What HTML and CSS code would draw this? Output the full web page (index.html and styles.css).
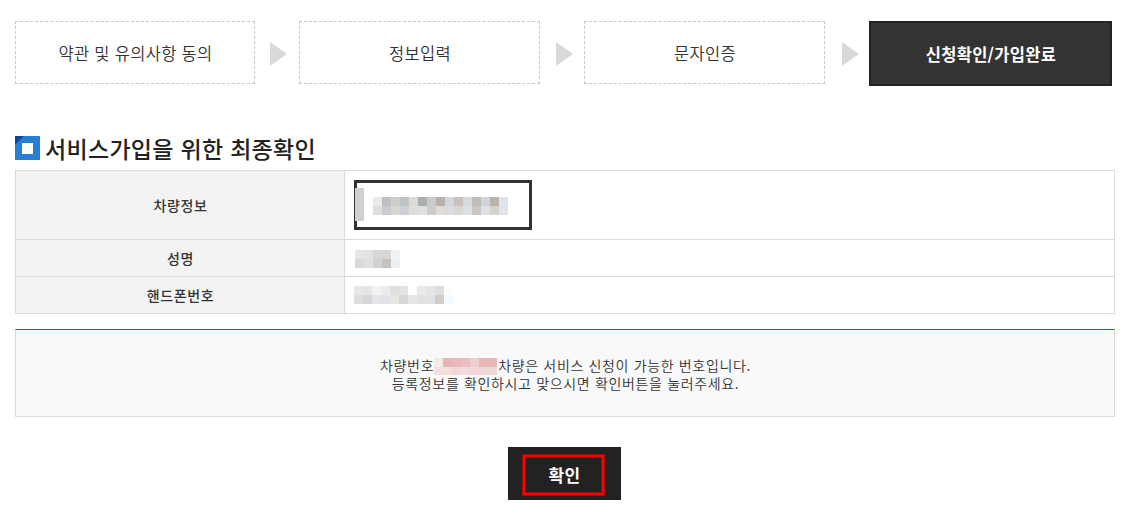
FILE: index.html
```html
<!DOCTYPE html>
<html lang="ko">
<head>
<meta charset="utf-8">
<title>서비스가입</title>
<link rel="stylesheet" href="styles.css">
</head>
<body>
<main class="page">
  <div class="steps">
    <div class="step">약관 및 유의사항 동의</div>
    <svg class="arrow" width="17" height="24" viewBox="0 0 17 24"><path d="M0 0L17 12L0 24Z"/></svg>
    <div class="step">정보입력</div>
    <svg class="arrow arrow-mid" width="17" height="24" viewBox="0 0 17 24"><path d="M0 0L17 12L0 24Z"/></svg>
    <div class="step">문자인증</div>
    <svg class="arrow arrow-last" width="17" height="24" viewBox="0 0 17 24"><path d="M0 0L17 12L0 24Z"/></svg>
    <div class="step step-on">신청확인/가입완료</div>
  </div>
  <h1 class="title">
    <svg class="title-icon" width="25" height="24" viewBox="0 0 25 24"><path fill="#267fd0" d="M0 0H25V24H0Z"/><path fill="#0d47a1" d="M0 0H9L0 9Z"/><path fill="#fff" d="M7 7H18V18H7Z"/></svg>
    <span>서비스가입을 위한 최종확인</span>
  </h1>
  <div class="table">
    <div class="th">차량정보</div>
    <div class="td">
      <div class="car">
        <svg width="135" height="18" viewBox="0 0 15 2" shape-rendering="crispEdges"><path fill="#ebeae8" d="M0 0h1v1h-1z"/><path fill="#bebfc0" d="M1 0h1v1h-1z"/><path fill="#cfcdc8" d="M2 0h1v1h-1z"/><path fill="#bfc4c8" d="M3 0h1v1h-1z"/><path fill="#dbdad5" d="M4 0h1v1h-1z"/><path fill="#acafb1" d="M5 0h1v1h-1z"/><path fill="#c9cbce" d="M6 0h1v1h-1z"/><path fill="#b8b2aa" d="M7 0h1v1h-1z"/><path fill="#d3d6dd" d="M8 0h1v1h-1z"/><path fill="#c9bfbc" d="M9 0h1v1h-1z"/><path fill="#d4dbdf" d="M10 0h1v1h-1z"/><path fill="#c0bcb9" d="M11 0h1v1h-1z"/><path fill="#d2d3d8" d="M12 0h1v1h-1z"/><path fill="#bab4ac" d="M13 0h1v1h-1z"/><path fill="#dfe3ed" d="M14 0h1v1h-1z"/><path fill="#e0dcd7" d="M0 1h1v1h-1z"/><path fill="#c8cbd1" d="M1 1h1v1h-1z"/><path fill="#d7d6d1" d="M2 1h1v1h-1z"/><path fill="#cfd0d5" d="M3 1h1v1h-1z"/><path fill="#dfdddb" d="M4 1h1v1h-1z"/><path fill="#dfe0e2" d="M5 1h1v1h-1z"/><path fill="#cccdcb" d="M6 1h1v1h-1z"/><path fill="#e2dcd9" d="M7 1h1v1h-1z"/><path fill="#d8dce0" d="M8 1h1v1h-1z"/><path fill="#d8d7d3" d="M9 1h1v1h-1z"/><path fill="#dddfe3" d="M10 1h1v1h-1z"/><path fill="#cbc6c3" d="M11 1h1v1h-1z"/><path fill="#dde1e4" d="M12 1h1v1h-1z"/><path fill="#d6d2cb" d="M13 1h1v1h-1z"/><path fill="#e0e3e9" d="M14 1h1v1h-1z"/></svg>
      </div>
    </div>
    <div class="th">성명</div>
    <div class="td td-name">
      <svg width="45" height="18" viewBox="0 0 5 2" shape-rendering="crispEdges"><path fill="#e6e6e7" d="M0 0h1v1h-1z"/><path fill="#e3e3e4" d="M1 0h1v1h-1z"/><path fill="#d4d8db" d="M2 0h1v1h-1z"/><path fill="#d8d7d5" d="M3 0h1v1h-1z"/><path fill="#f0f2f6" d="M4 0h1v1h-1z"/><path fill="#d9d8d7" d="M0 1h1v1h-1z"/><path fill="#e1e0df" d="M1 1h1v1h-1z"/><path fill="#ced3d5" d="M2 1h1v1h-1z"/><path fill="#c7c2c0" d="M3 1h1v1h-1z"/><path fill="#edeff4" d="M4 1h1v1h-1z"/></svg>
    </div>
    <div class="th">핸드폰번호</div>
    <div class="td">
      <svg width="99" height="18" viewBox="0 0 11 2" shape-rendering="crispEdges"><path fill="#e7e5e6" d="M0 0h1v1h-1z"/><path fill="#e6e5e6" d="M1 0h1v1h-1z"/><path fill="#f1f3f2" d="M2 0h1v1h-1z"/><path fill="#edebea" d="M3 0h1v1h-1z"/><path fill="#dfdfdf" d="M4 0h1v1h-1z"/><path fill="#e3e3e3" d="M5 0h1v1h-1z"/><path fill="#fcfdfd" d="M6 0h1v1h-1z"/><path fill="#e9e9e9" d="M7 0h1v1h-1z"/><path fill="#e7e5e3" d="M8 0h1v1h-1z"/><path fill="#dedddc" d="M9 0h1v1h-1z"/><path fill="#f9fdff" d="M10 0h1v1h-1z"/><path fill="#dfdddd" d="M0 1h1v1h-1z"/><path fill="#d9d6d7" d="M1 1h1v1h-1z"/><path fill="#e4e5e9" d="M2 1h1v1h-1z"/><path fill="#e2e3e5" d="M3 1h1v1h-1z"/><path fill="#e8e6e2" d="M4 1h1v1h-1z"/><path fill="#d7d7d7" d="M5 1h1v1h-1z"/><path fill="#e5e8eb" d="M6 1h1v1h-1z"/><path fill="#e4e2e0" d="M7 1h1v1h-1z"/><path fill="#e2e2e2" d="M8 1h1v1h-1z"/><path fill="#cfccca" d="M9 1h1v1h-1z"/><path fill="#f5faff" d="M10 1h1v1h-1z"/></svg>
    </div>
  </div>
  <div class="notice">
    <p class="line">차량번호<svg class="plate" width="64" height="17" viewBox="0 0 64 17" shape-rendering="crispEdges"><path fill="#f5e9e8" d="M0 0h9v9h-9z"/><path fill="#e8b3b3" d="M9 0h9v9h-9z"/><path fill="#e9b8b8" d="M18 0h9v9h-9z"/><path fill="#ebbfbf" d="M27 0h9v9h-9z"/><path fill="#edcfd0" d="M36 0h9v9h-9z"/><path fill="#e8b5b5" d="M45 0h18v9h-18z"/><path fill="#f4dfdf" d="M0 9h18v8h-18z"/><path fill="#f2d7d9" d="M18 9h9v8h-9z"/><path fill="#efdddd" d="M27 9h9v8h-9z"/><path fill="#f2d6d8" d="M36 9h9v8h-9z"/><path fill="#efd8d8" d="M45 9h18v8h-18z"/></svg>차량은 서비스 신청이 가능한 번호입니다.</p>
    <p class="line">등록정보를 확인하시고 맞으시면 확인버튼을 눌러주세요.</p>
  </div>
  <button class="confirm"><span class="mark">확인</span></button>
</main>
</body>
</html>
```
FILE: styles.css
```css
* { box-sizing: border-box; }
body {
  margin: 0;
  background: #fff;
  color: #333;
  font-family: "Noto Sans CJK KR", sans-serif;
}
svg { display: block; flex: none; }
.page {
  display: flex;
  flex-direction: column;
  width: 1130px;
  padding: 21px 15px 0;
}
.steps {
  display: grid;
  grid-template-columns: 240px 44px 241px 44px 241px 44px 243px;
  align-items: start;
  height: 65px;
}
.step {
  display: flex;
  align-items: center;
  justify-content: center;
  height: 63px;
  padding: 1px 0 0 1px;
  border: 1px dashed #c8c8c8;
  font-size: 16.5px;
  font-weight: 350;
  letter-spacing: 0.3px;
}
.step-on {
  height: 65px;
  border: 2px solid #222;
  background: #333;
  color: #fff;
  font-weight: 700;
}
.arrow {
  margin: 21px 0 0 15px;
  fill: #d9d9d9;
}
.arrow-mid { margin-left: 16px; }
.arrow-last { margin-left: 17px; }
.title {
  display: flex;
  align-items: center;
  gap: 5px;
  height: 24px;
  margin: 50px 0 10px;
  color: #222;
  font-size: 23px;
  font-weight: 500;
  letter-spacing: 0.3px;
  line-height: 24px;
}
.table {
  display: grid;
  grid-template-columns: 328px 1fr;
  grid-template-rows: 68px 36px 36px;
  gap: 1px;
  border: 1px solid #dadada;
  background: #dadada;
}
.th, .td {
  display: flex;
  align-items: center;
}
.th {
  justify-content: center;
  padding-left: 1px;
  background: #f3f3f3;
  font-size: 14px;
  font-weight: 500;
  letter-spacing: 0.6px;
}
.td {
  padding-left: 9px;
  background: #fff;
}
.td-name { padding: 2px 0 0 10px; }
.car {
  display: flex;
  align-items: center;
  position: relative;
  width: 178px;
  height: 50px;
  padding: 2px 0 0 16px;
  border: 3px solid #303331;
}
.car::before {
  content: "";
  position: absolute;
  left: -2px;
  top: 5px;
  width: 9px;
  height: 33px;
  background: #d0d0d0;
}
.notice {
  display: flex;
  flex-direction: column;
  align-items: center;
  height: 88px;
  margin-top: 15px;
  padding: 26px 0 0 1px;
  border: 1px solid #dadada;
  border-top-color: #1469c4;
  background: #f9f9f9;
}
.line {
  display: flex;
  height: 18px;
  margin: 0;
  font-size: 14px;
  font-weight: 350;
  letter-spacing: 0.65px;
  line-height: 18px;
  white-space: pre;
}
.plate { margin-top: 2px; }
.confirm {
  align-self: flex-start;
  width: 113px;
  height: 53px;
  margin: 30px 0 0 493px;
  padding: 7px 16px 4px 14px;
  border: 0;
  background: #222;
  color: #fff;
  font: 700 17px "Noto Sans CJK KR", sans-serif;
  letter-spacing: 0.3px;
}
.mark {
  display: flex;
  align-items: center;
  justify-content: center;
  height: 42px;
  padding: 0 0 2px 2px;
  border: 1px solid #a00a0a;
  box-shadow: inset 0 0 0 2px #f00, inset 0 0 0 3px #8a1010;
}
```
